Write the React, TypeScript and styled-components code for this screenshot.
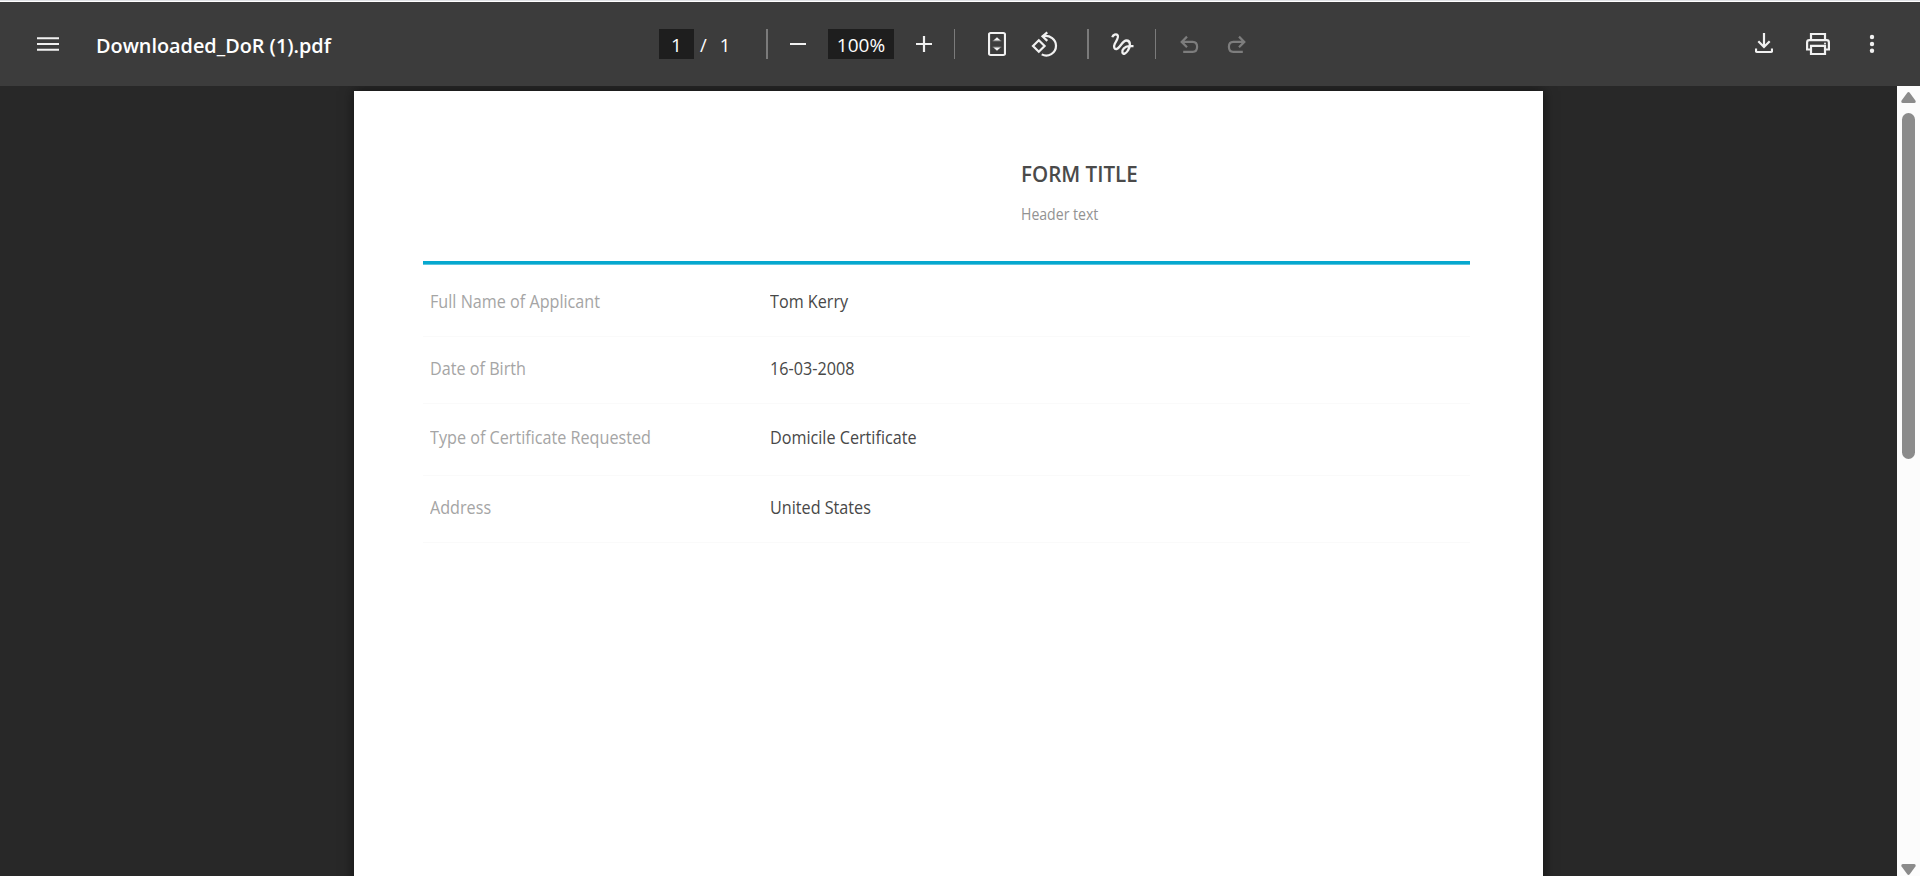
import React from 'react';
import styled, { createGlobalStyle } from 'styled-components';

const GlobalStyle = createGlobalStyle`
  * { box-sizing: border-box; }
  body {
    margin: 0;
    background: #282828;
    font-family: "Open Sans", "Noto Sans", sans-serif;
    overflow: hidden;
  }
`;

const Viewer = styled.div`
  display: flex;
  flex-direction: column;
  width: 100%;
  height: 100vh;
  border-top: 1px solid #dfe1e5;
`;

const Toolbar = styled.header`
  flex: none;
  display: grid;
  grid-template-columns: 659px 1fr auto;
  align-items: center;
  height: 85px;
  border-top: 1px solid #fff;
  background: #3c3c3c;
  color: #fff;
`;

const ToolGroup = styled.div`
  display: flex;
  align-items: center;
  height: 84px;
`;

const StartGroup = styled(ToolGroup)`
  padding-left: 36px;
`;

const EndGroup = styled(ToolGroup)`
  padding-right: 42px;
  gap: 30px;
`;

const IconButton = styled.button<{ $gap?: number; $dim?: boolean }>`
  flex: none;
  display: flex;
  margin: 0 0 0 ${(p) => p.$gap ?? 0}px;
  padding: 0;
  border: 0;
  background: none;
  color: ${(p) => (p.$dim ? '#7d7d7d' : '#f1f1f1')};
`;

const FileName = styled.h1`
  margin: 4px 0 0 35px;
  font-size: 20px;
  line-height: 28px;
  font-weight: 600;
  white-space: nowrap;
  transform: scaleX(0.992);
  transform-origin: left;
`;

const Field = styled.div<{ $width: number; $gap?: number }>`
  flex: none;
  width: ${(p) => p.$width}px;
  height: 30px;
  margin-left: ${(p) => p.$gap ?? 0}px;
  padding-top: 2px;
  background: #1e1e1e;
  font-size: 19px;
  line-height: 28px;
  text-align: center;
`;

const PageTotal = styled.div`
  display: flex;
  gap: 13px;
  width: 72px;
  padding: 2px 0 0 6px;
  font-size: 18.5px;
  line-height: 28px;
`;

const Divider = styled.span<{ $width: number; $gap?: number }>`
  flex: none;
  width: ${(p) => p.$width}px;
  height: 30px;
  margin-left: ${(p) => p.$gap ?? 0}px;
  background: #7b7b7b;
`;

const Workspace = styled.div`
  flex: 1;
  min-height: 0;
  display: flex;
  overflow: hidden;
`;

const Canvas = styled.main`
  flex: 1;
  display: flex;
  justify-content: center;
  padding-top: 5px;
  overflow: hidden;
`;

const Sheet = styled.article`
  flex: none;
  width: 1189px;
  height: 1680px;
  padding: 65px 73px 0 69px;
  background: #fff;
  box-shadow: 0 0 12px rgba(0, 0, 0, 0.55);
`;

const SheetHeader = styled.header`
  height: 108px;
  padding: 2px 0 0 598px;
  border-bottom: 3px solid #06a8cf;
  box-shadow: 0 1px 0 #5cc5de;
`;

const FormTitle = styled.h2`
  margin: 0;
  font-size: 22px;
  line-height: 30px;
  font-weight: 650;
  color: #4a4a4a;
  transform: scaleX(0.935);
  transform-origin: left;
`;

const HeaderText = styled.p`
  margin: 14px 0 0;
  font-size: 16px;
  line-height: 24px;
  color: #929292;
  transform: scaleX(0.88);
  transform-origin: left;
`;

const FormRow = styled.div<{ $height: number; $top: number }>`
  display: grid;
  grid-template-columns: 339.5px 1fr;
  height: ${(p) => p.$height}px;
  padding: ${(p) => p.$top}px 0 0 7px;
  border-bottom: 1px solid #fafafa;
  font-size: 17.5px;
  line-height: 24px;
`;

const Cell = styled.span`
  height: 24px;
  transform: scaleX(0.924);
  transform-origin: left;
`;

const Label = styled(Cell)`
  color: #a5a5a5;
`;

const Value = styled(Cell)`
  color: #484848;
`;

const Scrollbar = styled.aside`
  flex: none;
  display: flex;
  flex-direction: column;
  align-items: center;
  width: 23px;
  padding: 6px 0 1px;
  background: #fcfcfc;
  color: #8b8b8b;
`;

const Thumb = styled.div`
  width: 13px;
  height: 346px;
  margin: 10px 0 auto;
  border-radius: 7px;
  background: currentColor;
`;

const Arrow = styled.svg<{ $down?: boolean }>`
  flex: none;
  display: block;
  transform: ${(p) => (p.$down ? 'rotate(180deg)' : 'none')};
`;

type GlyphProps = { w: number; h?: number; sw?: number; children: React.ReactNode };

const Glyph = ({ w, h = 26, sw = 2.2, children }: GlyphProps) => (
  <svg width={w} height={h} viewBox={`0 0 ${w} ${h}`} fill="none" stroke="currentColor" strokeWidth={sw}>
    {children}
  </svg>
);

const rows = [
  { label: 'Full Name of Applicant', value: 'Tom Kerry', height: 73, top: 25 },
  { label: 'Date of Birth', value: '16-03-2008', height: 67, top: 19 },
  { label: 'Type of Certificate Requested', value: 'Domicile Certificate', height: 72, top: 21 },
  { label: 'Address', value: 'United States', height: 67, top: 19 },
];

const ScrollArrow = ({ down }: { down?: boolean }) => (
  <Arrow $down={down} width="15" height="11" viewBox="0 0 15 11" fill="currentColor">
    <path d="M6.3.7Q7.5-.6 8.7.7L14.4 8.6Q15.3 10.8 13.2 11H1.8Q-.3 10.8.6 8.6z" />
  </Arrow>
);

export default function App() {
  return (
    <>
      <GlobalStyle />
      <Viewer>
        <Toolbar>
          <StartGroup>
            <IconButton aria-label="Menu">
              <Glyph w={25} sw={2}>
                <path d="M1 7.3h22M1 13h22M1 18.7h22" />
              </Glyph>
            </IconButton>
            <FileName>Downloaded_DoR (1).pdf</FileName>
          </StartGroup>

          <ToolGroup>
            <Field $width={35}>1</Field>
            <PageTotal>
              <span>/</span>
              <span>1</span>
            </PageTotal>
            <Divider $width={2} />
            <IconButton $gap={22} aria-label="Zoom out">
              <Glyph w={16} sw={2}>
                <path d="M0 13h16" />
              </Glyph>
            </IconButton>
            <Field $width={66} $gap={22}>100%</Field>
            <IconButton $gap={22} aria-label="Zoom in">
              <Glyph w={16} sw={2.2}>
                <path d="M0 13h16M8 5v16" />
              </Glyph>
            </IconButton>
            <Divider $width={1} $gap={22} />
            <IconButton $gap={33} aria-label="Fit to page">
              <Glyph w={18}>
                <rect x="1" y="2" width="16" height="22" rx="1.6" />
                <path d="M9 6.2l3.6 3.4H5.4zM9 19.8l3.6-3.4H5.4z" fill="currentColor" stroke="none" />
                <path d="M4.6 9.9h8.8M4.6 16.1h8.8" strokeWidth=".6" opacity=".6" />
              </Glyph>
            </IconButton>
            <IconButton $gap={25} aria-label="Rotate counterclockwise">
              <Glyph w={27}>
                <path d="M7.8 9.2l5.8 5.8-5.8 5.8L2 15z" />
                <path d="M12 5.1C19 3.6 25 8.6 25 14.7c0 7.3-7.8 12.2-14.3 8.7" />
                <path d="M16.3 1.3l-4.8 4 4.8 4.6" />
              </Glyph>
            </IconButton>
            <Divider $width={2} $gap={29} />
            <IconButton $gap={22} aria-label="Draw">
              <Glyph w={23} sw={2.3}>
                <path d="M1.3 6.3C2 3.7 5.2 2.4 6.6 4.2c1.5 2-1.3 5.6-2.8 8.6-1.6 3.3-.3 5.6 1.7 5.2C9 17.3 11.3 9.5 15.4 9.5c5 0 3.8 6.5 1.5 10-2 3.2-4.7 4.3-5.5 2-.9-2.8 2.6-6.2 6.4-6.4h4.7" />
              </Glyph>
            </IconButton>
            <Divider $width={1} $gap={21} />
            <IconButton $gap={24} $dim aria-label="Undo">
              <Glyph w={19}>
                <path d="M2 10.9h10.8c2.7 0 4.3 1.6 4.3 4.9s-1.6 5.1-4.3 5.1H3.2M7 5.6L1.7 10.9 7 16.2" />
              </Glyph>
            </IconButton>
            <IconButton $gap={28} $dim aria-label="Redo">
              <Glyph w={19}>
                <path d="M17 10.9H6.2c-2.7 0-4.3 1.6-4.3 4.9s1.6 5.1 4.3 5.1h9.6M12 5.6l5.3 5.3-5.3 5.3" />
              </Glyph>
            </IconButton>
          </ToolGroup>

          <EndGroup>
            <IconButton aria-label="Download">
              <Glyph w={18}>
                <path d="M9 2v13.5M3.3 10.3L9 16l5.7-5.7M1 17.6v2.3q0 1.1 1.1 1.1h13.8q1.1 0 1.1-1.1v-2.3" />
              </Glyph>
            </IconButton>
            <IconButton $gap={3} aria-label="Print">
              <Glyph w={24}>
                <path d="M5 9V3h14v6M5 18.5H1.1V11.5q0-2.3 2.3-2.3h17.2q2.3 0 2.3 2.3v7H19" />
                <path d="M5 14.8h14V23H5z" />
                <circle cx="19" cy="12.4" r="1" fill="currentColor" stroke="none" />
              </Glyph>
            </IconButton>
            <IconButton $gap={6} aria-label="More actions">
              <Glyph w={12}>
                <g fill="currentColor" stroke="none">
                  <circle cx="6" cy="6" r="2.2" />
                  <circle cx="6" cy="13" r="2.2" />
                  <circle cx="6" cy="19.8" r="2.2" />
                </g>
              </Glyph>
            </IconButton>
          </EndGroup>
        </Toolbar>

        <Workspace>
          <Canvas>
            <Sheet>
              <SheetHeader>
                <FormTitle>FORM TITLE</FormTitle>
                <HeaderText>Header text</HeaderText>
              </SheetHeader>
              {rows.map((row) => (
                <FormRow key={row.label} $height={row.height} $top={row.top}>
                  <Label>{row.label}</Label>
                  <Value>{row.value}</Value>
                </FormRow>
              ))}
            </Sheet>
          </Canvas>
          <Scrollbar>
            <ScrollArrow />
            <Thumb />
            <ScrollArrow down />
          </Scrollbar>
        </Workspace>
      </Viewer>
    </>
  );
}
